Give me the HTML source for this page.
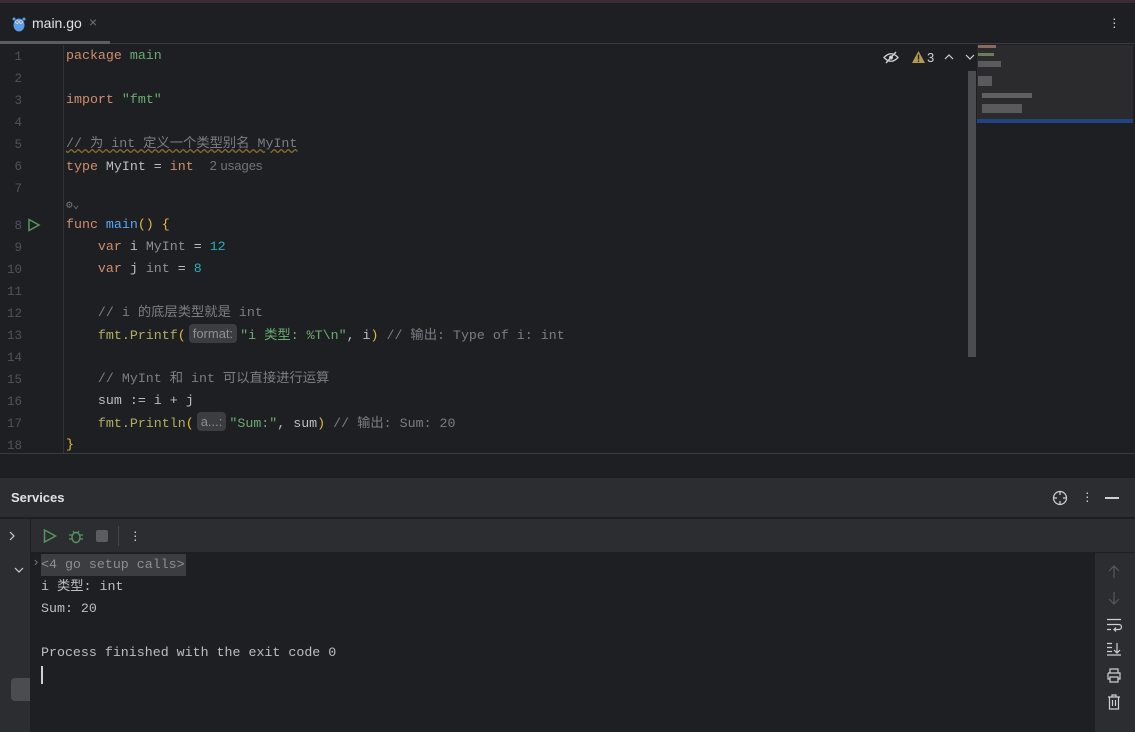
<!DOCTYPE html>
<html><head><meta charset="utf-8"><style>
*{margin:0;padding:0;box-sizing:border-box}
body{width:1135px;height:732px;background:#1e1f22;overflow:hidden;position:relative;font-family:"Liberation Sans","Noto Sans CJK SC",sans-serif;color:#bcbec4}
.abs{position:absolute}
.mono{font-family:"Liberation Mono","Noto Sans CJK SC",monospace;font-size:13.3px;white-space:pre}
.ln{position:absolute;left:0;width:22px;text-align:right;color:#4e535b;font-family:"Liberation Mono",monospace;font-size:12.5px;line-height:22px}
.cl{position:absolute;left:66px;height:22px;line-height:22px}
.k{color:#cf8e6d}.s{color:#6aab73}.n{color:#2aacb8}.f{color:#56a8f5}.c{color:#7a7e85}.t{color:#8c8f94}.p{color:#b3ae60}.y{color:#e8ba36}
.hint{display:inline-block;background:#3b3d41;color:#8c8f94;font-family:"Liberation Sans",sans-serif;font-size:13px;border-radius:4px;padding:0 4px;line-height:19px;margin:0 3px;vertical-align:1px}
</style></head><body>
<div class="abs" style="left:0;top:0;width:1135px;height:3px;background:#3b2b36"></div>
<div class="abs" style="left:0;top:3px;width:1135px;height:41px;background:#1e1f22;border-bottom:1px solid #393b40"></div>
<svg class="abs" style="left:12px;top:16px" width="14" height="16" viewBox="0 0 14 16"><ellipse cx="7" cy="9" rx="5.5" ry="6.5" fill="#5d9ee8"/><circle cx="2" cy="3" r="1.5" fill="#5d9ee8"/><circle cx="12" cy="3" r="1.5" fill="#5d9ee8"/><circle cx="5" cy="6" r="1.6" fill="#fff"/><circle cx="9" cy="6" r="1.6" fill="#fff"/><circle cx="5" cy="6" r=".7" fill="#000"/><circle cx="9" cy="6" r=".7" fill="#000"/></svg>
<div class="abs" style="left:32px;top:15px;font-size:14px;color:#dfe1e5">main.go</div>
<div class="abs" style="left:89px;top:14px;font-size:14px;color:#6f737a">×</div>
<div class="abs" style="left:0;top:41px;width:110px;height:3px;background:#5a5d63"></div>
<div class="abs" style="left:1112px;top:16px;color:#ced0d6;font-size:14px;line-height:4px">·<br>·<br>·</div>
<div class="abs" style="left:63px;top:45px;width:1px;height:408px;background:#313438"></div>
<div class="abs" style="left:0;top:453px;width:1135px;height:1px;background:#393b40"></div>
<div class="mono">
<div class="ln" style="top:46px">1</div><div class="ln" style="top:68px">2</div><div class="ln" style="top:90px">3</div><div class="ln" style="top:112px">4</div><div class="ln" style="top:134px">5</div><div class="ln" style="top:156px">6</div><div class="ln" style="top:178px">7</div><div class="ln" style="top:215px">8</div><div class="ln" style="top:237px">9</div><div class="ln" style="top:259px">10</div><div class="ln" style="top:281px">11</div><div class="ln" style="top:303px">12</div><div class="ln" style="top:325px">13</div><div class="ln" style="top:347px">14</div><div class="ln" style="top:369px">15</div><div class="ln" style="top:391px">16</div><div class="ln" style="top:413px">17</div><div class="ln" style="top:435px">18</div>
<div class="cl" style="top:45px"><span class="k">package</span> <span class="s">main</span></div>
<div class="cl" style="top:89px"><span class="k">import</span> <span class="s">"fmt"</span></div>
<div class="cl c" style="top:133px;text-decoration:underline wavy #8a6d2e">// 为 int 定义一个类型别名 MyInt</div>
<div class="cl" style="top:155px"><span class="k">type</span> MyInt = <span class="k">int</span>  <span style="font-family:'Liberation Sans',sans-serif;font-size:13px;color:#6f737a">2 usages</span></div>
<div class="cl" style="top:195px;color:#6f737a;font-size:11px">⚙⌄</div>
<div class="cl" style="top:214px"><span class="k">func</span> <span class="f">main</span><span class="y">()</span> <span class="y">{</span></div>
<div class="cl" style="top:236px">    <span class="k">var</span> i <span class="t">MyInt</span> = <span class="n">12</span></div>
<div class="cl" style="top:258px">    <span class="k">var</span> j <span class="t">int</span> = <span class="n">8</span></div>
<div class="cl c" style="top:302px">    // i 的底层类型就是 int</div>
<div class="cl" style="top:324px">    <span class="p">fmt.Printf</span><span class="y">(</span><span class="hint">format:</span><span class="s">"i 类型: %T\n"</span>, i<span class="y">)</span> <span class="c">// 输出: Type of i: int</span></div>
<div class="cl c" style="top:368px">    // MyInt 和 int 可以直接进行运算</div>
<div class="cl" style="top:390px">    sum := i + j</div>
<div class="cl" style="top:412px">    <span class="p">fmt.Println</span><span class="y">(</span><span class="hint">a...:</span><span class="s">"Sum:"</span>, sum<span class="y">)</span> <span class="c">// 输出: Sum: 20</span></div>
<div class="cl y" style="top:434px">}</div>
</div>
<svg class="abs" style="left:27px;top:218px" width="14" height="14"><path d="M2 1.5 L12 7 L2 12.5Z" fill="none" stroke="#57965c" stroke-width="1.5"/></svg>
<svg class="abs" style="left:883px;top:51px" width="16" height="13"><path d="M1 6.5Q8 -1 15 6.5Q8 14 1 6.5Z" fill="none" stroke="#ced0d6" stroke-width="1.3"/><circle cx="8" cy="6.5" r="2" fill="#ced0d6"/><path d="M3 12L13 1" stroke="#ced0d6" stroke-width="1.4"/></svg>
<svg class="abs" style="left:912px;top:51px" width="13" height="12"><path d="M6.5 0 L13 12 H0Z" fill="#b49b52"/><rect x="5.8" y="3.5" width="1.4" height="5" fill="#1e1f22"/><rect x="5.8" y="9.5" width="1.4" height="1.4" fill="#1e1f22"/></svg>
<div class="abs" style="left:927px;top:50px;font-size:13px;color:#ced0d6">3</div>
<svg class="abs" style="left:944px;top:53px" width="10" height="7"><path d="M1 6L5 2L9 6" fill="none" stroke="#ced0d6" stroke-width="1.2"/></svg>
<svg class="abs" style="left:965px;top:54px" width="10" height="7"><path d="M1 1L5 5L9 1" fill="none" stroke="#ced0d6" stroke-width="1.2"/></svg>
<div class="abs" style="left:968px;top:71px;width:8px;height:286px;background:#4a4c50"></div>
<div class="abs" style="left:977px;top:45px;width:156px;height:77px;background:#2b2b2d"></div>
<div class="abs" style="left:978px;top:45px;width:18px;height:3px;background:#8a6a5a"></div>
<div class="abs" style="left:978px;top:53px;width:16px;height:3px;background:#6b7d5c"></div>
<div class="abs" style="left:978px;top:61px;width:23px;height:6px;background:#5a5b5e"></div>
<div class="abs" style="left:978px;top:76px;width:14px;height:10px;background:#5a5a5c"></div>
<div class="abs" style="left:982px;top:93px;width:50px;height:5px;background:#606060"></div>
<div class="abs" style="left:982px;top:104px;width:40px;height:9px;background:#5a5a5c"></div>
<div class="abs" style="left:977px;top:119px;width:156px;height:4px;background:#214283"></div>
<div class="abs" style="left:0;top:478px;width:1135px;height:40px;background:#2b2d30;border-bottom:1px solid #1e1f22"></div>
<div class="abs" style="left:11px;top:490px;font-size:13px;font-weight:bold;color:#dfe1e5">Services</div>
<svg class="abs" style="left:1052px;top:490px" width="16" height="16"><circle cx="8" cy="8" r="6.5" fill="none" stroke="#ced0d6" stroke-width="1.2"/><path d="M8 1v4M8 11v4M1 8h4M11 8h4" stroke="#ced0d6" stroke-width="1.2"/></svg>
<div class="abs" style="left:1085px;top:490px;color:#ced0d6;font-size:14px;line-height:4px">·<br>·<br>·</div>
<div class="abs" style="left:1105px;top:497px;width:14px;height:1.5px;background:#ced0d6"></div>
<div class="abs" style="left:0;top:519px;width:30px;height:213px;background:#2b2d30"></div>
<div class="abs" style="left:30px;top:519px;width:1105px;height:34px;background:#2b2d30;border-bottom:1px solid #1e1f22;border-left:1px solid #1e1f22"></div>
<svg class="abs" style="left:9px;top:531px" width="7" height="10"><path d="M1 1L5 5L1 9" fill="none" stroke="#ced0d6" stroke-width="1.2"/></svg>
<svg class="abs" style="left:14px;top:567px" width="10" height="7"><path d="M1 1L5 5L9 1" fill="none" stroke="#ced0d6" stroke-width="1.2"/></svg>
<div class="abs" style="left:11px;top:678px;width:19px;height:23px;background:#4a4c50;border-radius:4px 0 0 4px"></div>
<svg class="abs" style="left:43px;top:529px" width="14" height="14"><path d="M1.5 1 L12.5 7 L1.5 13Z" fill="none" stroke="#57965c" stroke-width="1.5"/></svg>
<svg class="abs" style="left:68px;top:528px" width="16" height="16"><ellipse cx="8" cy="9.5" rx="4" ry="5" fill="none" stroke="#57965c" stroke-width="1.4"/><path d="M1 7h3M12 7h3M1 11h3M12 11h3M5 3l1.5 2M11 3l-1.5 2" stroke="#57965c" stroke-width="1.3"/></svg>
<div class="abs" style="left:96px;top:530px;width:12px;height:12px;background:#5a5c60;border-radius:2px"></div>
<div class="abs" style="left:118px;top:526px;width:1px;height:20px;background:#43454a"></div>
<div class="abs" style="left:133px;top:529px;color:#ced0d6;font-size:14px;line-height:4px">·<br>·<br>·</div>
<div class="abs" style="left:1095px;top:553px;width:40px;height:179px;background:#2b2d30"></div>
<div class="mono" style="position:absolute;left:0;top:0">
<div class="abs" style="left:32px;top:555px;color:#6f737a">›</div>
<div class="abs" style="left:41px;top:554px;height:22px;line-height:22px;background:#3b3d41;color:#8c8f94;padding-right:1px">&lt;4 go setup calls&gt;</div>
<div class="abs" style="left:41px;top:576px;line-height:22px;color:#bcbec4">i 类型: int</div>
<div class="abs" style="left:41px;top:598px;line-height:22px;color:#bcbec4">Sum: 20</div>
<div class="abs" style="left:41px;top:642px;line-height:22px;color:#bcbec4">Process finished with the exit code 0</div>
</div>
<div class="abs" style="left:41px;top:666px;width:2px;height:18px;background:#ced0d6"></div>
<svg class="abs" style="left:1108px;top:565px" width="12" height="14"><path d="M6 13V1M1 6l5-5 5 5" fill="none" stroke="#55585e" stroke-width="1.2"/></svg>
<svg class="abs" style="left:1108px;top:591px" width="12" height="14"><path d="M6 1v12M1 8l5 5 5-5" fill="none" stroke="#55585e" stroke-width="1.2"/></svg>
<svg class="abs" style="left:1106px;top:618px" width="16" height="14"><path d="M1 1.5h14M1 6.5h12a2.5 2.5 0 0 1 0 5h-5M10 9.5l-2 2 2 2M1 11.5h4" fill="none" stroke="#ced0d6" stroke-width="1.2"/></svg>
<svg class="abs" style="left:1106px;top:642px" width="16" height="14"><path d="M1 1.5h5M1 5.5h5M1 9.5h5M1 13h14M11 1v10M8 8l3 3 3-3" fill="none" stroke="#ced0d6" stroke-width="1.2"/></svg>
<svg class="abs" style="left:1106px;top:668px" width="16" height="15"><path d="M4 5V1h8v4M2 5h12v6h-2M4 11H2V5M4 9h8v5H4z" fill="none" stroke="#ced0d6" stroke-width="1.2"/></svg>
<svg class="abs" style="left:1107px;top:694px" width="14" height="16"><path d="M1 3h12M5 3V1h4v2M2.5 3v12h9V3M5.5 6v6M8.5 6v6" fill="none" stroke="#ced0d6" stroke-width="1.2"/></svg>
</body></html>
